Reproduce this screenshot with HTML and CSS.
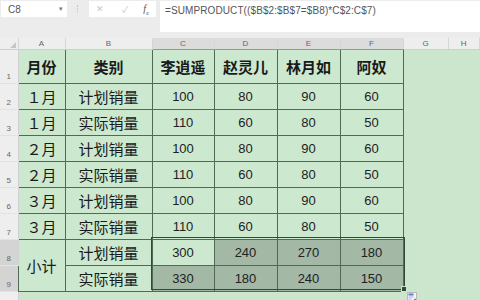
FILE: index.html
```html
<!DOCTYPE html>
<html lang="zh-CN">
  <head>
    <meta charset="UTF-8" />
    <title>销量汇总</title>
    <link rel="stylesheet" href="styles.css">
  </head>
  <body>
    <div class="toolbar">
      <div class="namebox">
        <span>C8</span>
        <span class="arrow">&#9662;</span>
      </div>
      <div class="grip"></div>
      <div class="fxbox">
        <span class="cancel">&#x2715;</span>
        <span class="ok">&#x2713;</span>
        <span class="fx">f<sub>x</sub></span>
      </div>
      <div class="formula">=SUMPRODUCT(($B$2:$B$7=$B8)*C$2:C$7)</div>
    </div>

    <div class="sheet">
      <table class="grid">
        <colgroup>
          <col class="w-rh" />
          <col class="w-a" />
          <col class="w-b" />
          <col class="w-c" />
          <col class="w-d" />
          <col class="w-e" />
          <col class="w-f" />
          <col class="w-g" />
          <col />
        </colgroup>
        <tr class="col-heads">
          <th class="corner"><span class="tri"></span></th>
          <th>A</th>
          <th>B</th>
          <th class="sel">C</th>
          <th class="sel">D</th>
          <th class="sel">E</th>
          <th class="sel">F</th>
          <th>G</th>
          <th>H</th>
        </tr>
        <tr class="r-head">
          <td class="rh">1</td>
          <td class="c bold">月份</td>
          <td class="c bold">类别</td>
          <td class="c bold">李逍遥</td>
          <td class="c bold">赵灵儿</td>
          <td class="c bold">林月如</td>
          <td class="c bold">阿奴</td>
          <td></td><td></td>
        </tr>
        <tr class="r-body">
          <td class="rh">2</td>
          <td class="c">１月</td><td class="c">计划销量</td>
          <td class="c num">100</td><td class="c num">80</td><td class="c num">90</td><td class="c num">60</td>
          <td></td><td></td>
        </tr>
        <tr class="r-body">
          <td class="rh">3</td>
          <td class="c">１月</td><td class="c">实际销量</td>
          <td class="c num">110</td><td class="c num">60</td><td class="c num">80</td><td class="c num">50</td>
          <td></td><td></td>
        </tr>
        <tr class="r-body">
          <td class="rh">4</td>
          <td class="c">２月</td><td class="c">计划销量</td>
          <td class="c num">100</td><td class="c num">80</td><td class="c num">90</td><td class="c num">60</td>
          <td></td><td></td>
        </tr>
        <tr class="r-body">
          <td class="rh">5</td>
          <td class="c">２月</td><td class="c">实际销量</td>
          <td class="c num">110</td><td class="c num">60</td><td class="c num">80</td><td class="c num">50</td>
          <td></td><td></td>
        </tr>
        <tr class="r-body">
          <td class="rh">6</td>
          <td class="c">３月</td><td class="c">计划销量</td>
          <td class="c num">100</td><td class="c num">80</td><td class="c num">90</td><td class="c num">60</td>
          <td></td><td></td>
        </tr>
        <tr class="r-body">
          <td class="rh">7</td>
          <td class="c">３月</td><td class="c">实际销量</td>
          <td class="c num">110</td><td class="c num">60</td><td class="c num">80</td><td class="c num">50</td>
          <td></td><td></td>
        </tr>
        <tr class="r-body">
          <td class="rh hi">8</td>
          <td class="c" rowspan="2">小计</td><td class="c">计划销量</td>
          <td class="c num">300</td><td class="c num shade">240</td><td class="c num shade">270</td><td class="c num shade">180</td>
          <td></td><td></td>
        </tr>
        <tr class="r-body">
          <td class="rh hi">9</td>
          <td class="c">实际销量</td>
          <td class="c num shade">330</td><td class="c num shade">180</td><td class="c num shade">240</td><td class="c num shade">150</td>
          <td></td><td></td>
        </tr>
        <tr class="r-empty">
          <td class="rh"></td>
          <td></td><td></td><td></td><td></td><td></td><td></td><td></td><td></td>
        </tr>
      </table>

      <div class="selection">
        <span class="handle"></span>
        <svg class="paste" width="10" height="10" viewBox="0 0 10 10">
          <rect x="0.5" y="0.5" width="9" height="9" fill="#f4f4f4" stroke="#b9b9b9" />
          <rect x="1.5" y="1.5" width="5" height="2" fill="#5a7fcf" />
          <rect x="1.5" y="4.5" width="5" height="1" fill="#9fb3e0" />
          <rect x="1.5" y="6.5" width="3" height="1" fill="#9fb3e0" />
          <path d="M7 7.5h2M8 6.5v2" stroke="#777" stroke-width="0.8" />
        </svg>
      </div>
    </div>
  </body>
</html>
```

FILE: styles.css
```css
body {
  margin: 0;
  background-color: #cbe6cd;
  font-family: "Liberation Sans", "Noto Sans CJK SC", sans-serif;
  overflow: hidden;
}

/* formula bar */
.toolbar {
  display: flex;
  align-items: flex-start;
  height: 38px;
  padding: 1px 0 0 1px;
  box-sizing: border-box;
  background-color: #ececec;
}

.namebox {
  display: flex;
  align-items: center;
  justify-content: space-between;
  width: 66px;
  height: 16px;
  padding: 0 4px 0 7px;
  box-sizing: border-box;
  background: #fff;
  font-size: 10px;
  color: #555;
}

.namebox .arrow {
  font-size: 7px;
  color: #777;
}

.grip {
  width: 1px;
  height: 8px;
  margin: 4px 10px 0 10px;
  border-left: 1px dotted #c4c4c4;
}

.fxbox {
  display: flex;
  align-items: center;
  width: 67px;
  height: 16px;
  padding-left: 7px;
  box-sizing: border-box;
  background: #fff;
  font-size: 9px;
  color: #c8c8c8;
}

.fxbox .ok {
  margin-left: 18px;
}

.fxbox .fx {
  margin-left: 15px;
  font-family: "Liberation Serif", serif;
  font-style: italic;
  font-size: 10px;
  color: #555;
}

.fxbox .fx sub {
  font-size: 6px;
}

.formula {
  flex: 1;
  height: 31px;
  margin-left: 4px;
  padding: 4px 0 0 5px;
  box-sizing: border-box;
  background: #fff;
  font-size: 10px;
  color: #555;
  letter-spacing: 0.1px;
}

/* sheet */
.sheet {
  position: relative;
}

.grid {
  width: 480px;
  table-layout: fixed;
  border-collapse: collapse;
}

.w-rh { width: 18px; }
.w-a { width: 47px; }
.w-b { width: 87px; }
.w-c { width: 62px; }
.w-d { width: 63px; }
.w-e { width: 63px; }
.w-f { width: 63px; }
.w-g { width: 45px; }

.grid td,
.grid th {
  padding: 0;
  overflow: hidden;
  white-space: nowrap;
}

.col-heads th {
  height: 11px;
  font-weight: normal;
  font-size: 8px;
  line-height: 10px;
  color: #666;
  background-color: #eeeeee;
  border-right: 1px solid #d6d6d6;
  border-bottom: 1px solid #cfcfcf;
}

.col-heads th.sel {
  background-color: #dcdcdc;
  border-bottom: 1px solid #8aa08d;
}

.corner {
  position: relative;
}

.corner .tri {
  position: absolute;
  right: 2px;
  bottom: 1px;
  width: 0;
  height: 0;
  border-left: 6px solid transparent;
  border-bottom: 6px solid #c6c6c6;
}

.rh {
  vertical-align: bottom;
  text-align: center;
  font-size: 8px;
  line-height: 12px;
  color: #666;
  background-color: #eeeeee;
  border-right: 1px solid #d0d0d0;
  border-bottom: 1px solid #e2e2e2;
}

.rh.hi {
  background-color: #d4d4d4;
}

.r-head { height: 34px; }
.r-body { height: 26px; }
.r-empty { height: 12px; }

.c {
  text-align: center;
  vertical-align: middle;
  font-family: "Noto Sans CJK SC", sans-serif;
  font-size: 15px;
  color: #1a1a1a;
  background-color: #cce8cf;
  border: 1px solid #4f6a55;
}

.c.bold {
  font-weight: bold;
}

.c.num {
  font-family: "Liberation Sans", sans-serif;
  font-size: 13px;
  color: #222;
}

.c.shade {
  background-color: #a3b8a5;
}

/* selection frame over C8:F9 */
.selection {
  position: absolute;
  left: 151px;
  top: 199px;
  width: 252px;
  height: 51px;
  border: 1px solid #2f4a35;
  pointer-events: none;
}

.handle {
  position: absolute;
  right: -3px;
  bottom: -3px;
  width: 4px;
  height: 4px;
  background: #2f4a35;
  border: 1px solid #cbe6cd;
}

.paste {
  position: absolute;
  right: -13px;
  bottom: -13px;
}
```
